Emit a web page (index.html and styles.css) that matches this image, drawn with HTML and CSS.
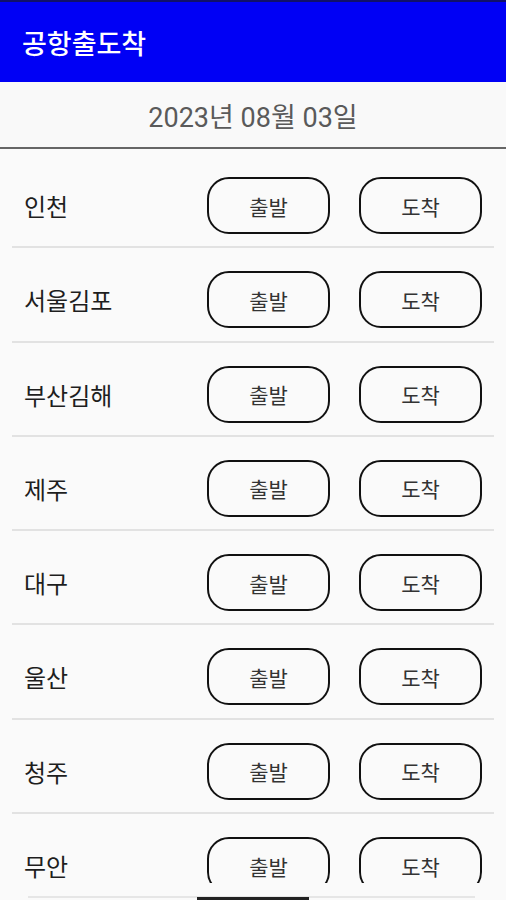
FILE: index.html
```html
<!DOCTYPE html>
<html lang="ko">
<head>
    <meta charset="UTF-8">
    <meta name="viewport" content="width=device-width, initial-scale=1.0">
    <title>공항출도착</title>
    <link rel="stylesheet" href="styles.css">
</head>
<body>
    <div class="app">
        <header class="toolbar">
            <h1>공항출도착</h1>
        </header>

        <div class="date-bar">2023년 08월 03일</div>

        <div class="airport-list">
            <div class="airport-row">
                <span class="airport-name">인천</span>
                <button class="flight-btn">출발</button>
                <button class="flight-btn">도착</button>
            </div>
            <div class="airport-row">
                <span class="airport-name">서울김포</span>
                <button class="flight-btn">출발</button>
                <button class="flight-btn">도착</button>
            </div>
            <div class="airport-row">
                <span class="airport-name">부산김해</span>
                <button class="flight-btn">출발</button>
                <button class="flight-btn">도착</button>
            </div>
            <div class="airport-row">
                <span class="airport-name">제주</span>
                <button class="flight-btn">출발</button>
                <button class="flight-btn">도착</button>
            </div>
            <div class="airport-row">
                <span class="airport-name">대구</span>
                <button class="flight-btn">출발</button>
                <button class="flight-btn">도착</button>
            </div>
            <div class="airport-row">
                <span class="airport-name">울산</span>
                <button class="flight-btn">출발</button>
                <button class="flight-btn">도착</button>
            </div>
            <div class="airport-row">
                <span class="airport-name">청주</span>
                <button class="flight-btn">출발</button>
                <button class="flight-btn">도착</button>
            </div>
            <div class="airport-row">
                <span class="airport-name">무안</span>
                <button class="flight-btn">출발</button>
                <button class="flight-btn">도착</button>
            </div>
        </div>

        <div class="nav-strip">
            <div class="nav-line"></div>
            <div class="nav-handle"></div>
        </div>
    </div>
</body>
</html>
```

FILE: styles.css
```css
body {
    margin: 0;
    padding: 0;
    background-color: #fafafa;
    font-family: Roboto, "Noto Sans CJK KR", sans-serif;
}

.app {
    width: 506px;
    height: 900px;
    display: flex;
    flex-direction: column;
    overflow: hidden;
}

.toolbar {
    height: 82px;
    flex-shrink: 0;
    background-color: #0000f5;
    border-top: 2px solid #10106a;
    box-sizing: border-box;
    display: flex;
    align-items: center;
    padding-left: 22px;
}

.toolbar h1 {
    margin: 0;
    color: #ffffff;
    font-size: 27px;
    font-weight: 500;
}

.date-bar {
    height: 67px;
    flex-shrink: 0;
    background-color: #f9f9f9;
    border-bottom: 2px solid #666666;
    box-sizing: border-box;
    display: flex;
    align-items: center;
    justify-content: center;
    padding-top: 2px;
    color: #5a5a5a;
    font-size: 27px;
}

.airport-list {
    height: 734px;
    flex-shrink: 0;
    overflow: hidden;
    padding-top: 5px;
    box-sizing: border-box;
}

.airport-row {
    margin: 0 12px;
    padding: 23px 12px 12.3px 12px;
    border-bottom: 2px solid #e2e2e2;
    display: flex;
    align-items: center;
}

.airport-name {
    flex: 1;
    color: #1e1e1e;
    font-size: 24px;
}

.flight-btn {
    width: 123px;
    height: 57px;
    margin-left: 29px;
    background-color: #fafafa;
    border: 2px solid #111111;
    border-radius: 22px;
    color: #333333;
    font-family: Roboto, "Noto Sans CJK KR", sans-serif;
    font-size: 21px;
    padding: 0;
}

.airport-row .flight-btn:first-of-type {
    margin-left: 0;
}

.nav-strip {
    flex: 1;
    position: relative;
}

.nav-line {
    position: absolute;
    left: 28px;
    right: 31px;
    bottom: 2px;
    height: 2px;
    background-color: #e6e6e6;
}

.nav-handle {
    position: absolute;
    left: 197px;
    width: 112px;
    bottom: 0;
    height: 3px;
    background-color: #222222;
}
```
